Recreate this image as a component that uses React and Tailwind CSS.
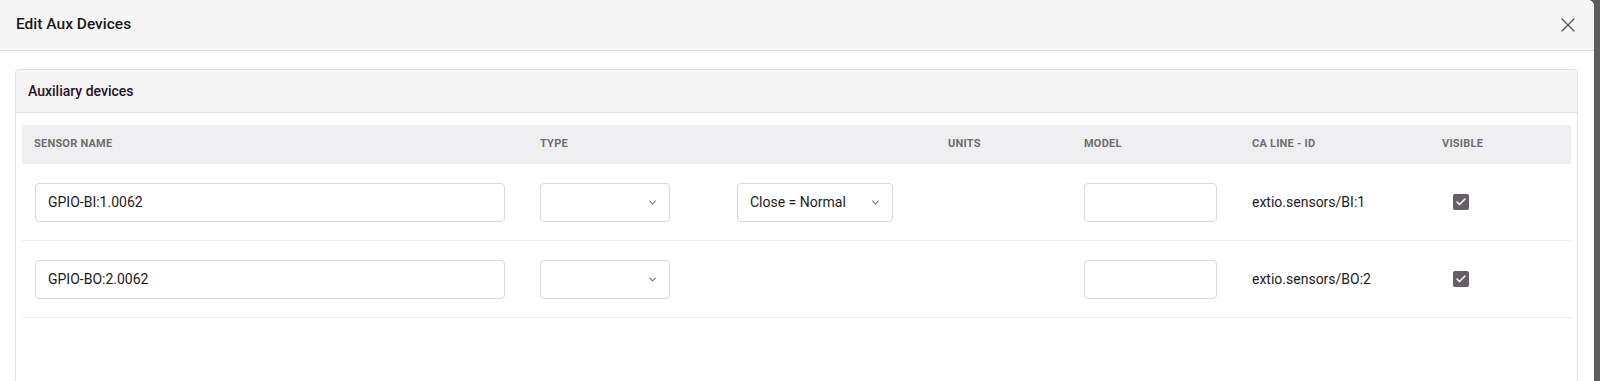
import { X, ChevronDown, Check } from 'lucide-react';

const columns = [
  { label: 'Sensor name', width: 'w-[506px]' },
  { label: 'Type', width: 'w-[197px]' },
  { label: '', width: 'w-[211px]' },
  { label: 'Units', width: 'w-[136px]' },
  { label: 'Model', width: 'w-[168px]' },
  { label: 'CA Line - ID', width: 'w-[190px]' },
  { label: 'Visible', width: 'w-[140px]' },
];

const devices = [
  { name: 'GPIO-BI:1.0062', mode: 'Close = Normal', line: 'extio.sensors/BI:1' },
  { name: 'GPIO-BO:2.0062', mode: null, line: 'extio.sensors/BO:2' },
];

function Select({ value, className }) {
  return (
    <div
      className={`h-[39px] flex items-center justify-between border border-[#d9d9d9] rounded-[4px] bg-white pl-3 pr-[11px] ${className}`}
    >
      <span className="text-[14px] text-[#1c1c1c]">{value}</span>
      <ChevronDown size={11} strokeWidth={2.2} className="text-[#6f6f6f]" />
    </div>
  );
}

function DeviceRow({ device }) {
  return (
    <div className="flex items-center h-[77px] border-b border-[#ececec]">
      <div className="w-[506px] pl-[13px]">
        <div className="w-[470px] h-[39px] flex items-center border border-[#d9d9d9] rounded-[4px] px-3 text-[14px] text-[#1c1c1c]">
          {device.name}
        </div>
      </div>
      <div className="w-[197px] pl-3">
        <Select value="" className="w-[130px]" />
      </div>
      <div className="w-[211px] pl-3">
        {device.mode && <Select value={device.mode} className="w-[156px]" />}
      </div>
      <div className="w-[136px]" />
      <div className="w-[168px] pl-3">
        <div className="w-[133px] h-[39px] border border-[#d9d9d9] rounded-[4px]" />
      </div>
      <div className="w-[190px] pl-3 text-[14px] text-[#1c1c1c]">{device.line}</div>
      <div className="w-[140px] pl-[23px]">
        <div className="w-4 h-4 rounded-[2px] bg-[#685e66] flex items-center justify-center">
          <Check size={12} strokeWidth={3} className="text-white" />
        </div>
      </div>
    </div>
  );
}

export default function App() {
  return (
    <div className="h-screen flex bg-[#5c5c5c] overflow-hidden font-['Roboto',sans-serif]">
      <div className="flex-1 bg-white rounded-tr-[6px] flex flex-col overflow-hidden">
        <div className="h-[51px] shrink-0 flex items-center justify-between bg-[#f5f5f5] border-b border-[#dedede] pl-4 pr-[14px]">
          <h2 className="text-[15.5px] font-medium text-[#1a1a1a]">Edit Aux Devices</h2>
          <X size={24} strokeWidth={1.3} className="text-[#555555]" />
        </div>
        <div className="flex-1 pt-[18px] pl-[15px] pr-[16px]">
          <div className="h-[400px] border border-[#e0e0e0] rounded-[4px]">
            <div className="h-[43px] flex items-center bg-[#f5f5f5] border-b border-[#e0e0e0] rounded-t-[4px] px-3">
              <span className="text-[14px] font-medium text-[#2a0f2a]">Auxiliary devices</span>
            </div>
            <div className="pt-3 px-[6px]">
              <div className="flex items-center h-[39px] bg-[#efeff1]">
                {columns.map((col, i) => (
                  <div
                    key={i}
                    className={`${col.width} px-3 text-[11px] font-bold uppercase text-[#6e6e6e] tracking-[0.02em]`}
                  >
                    {col.label}
                  </div>
                ))}
              </div>
              {devices.map((d) => (
                <DeviceRow key={d.name} device={d} />
              ))}
            </div>
          </div>
        </div>
      </div>
      <div className="w-[6px] shrink-0" />
    </div>
  );
}
